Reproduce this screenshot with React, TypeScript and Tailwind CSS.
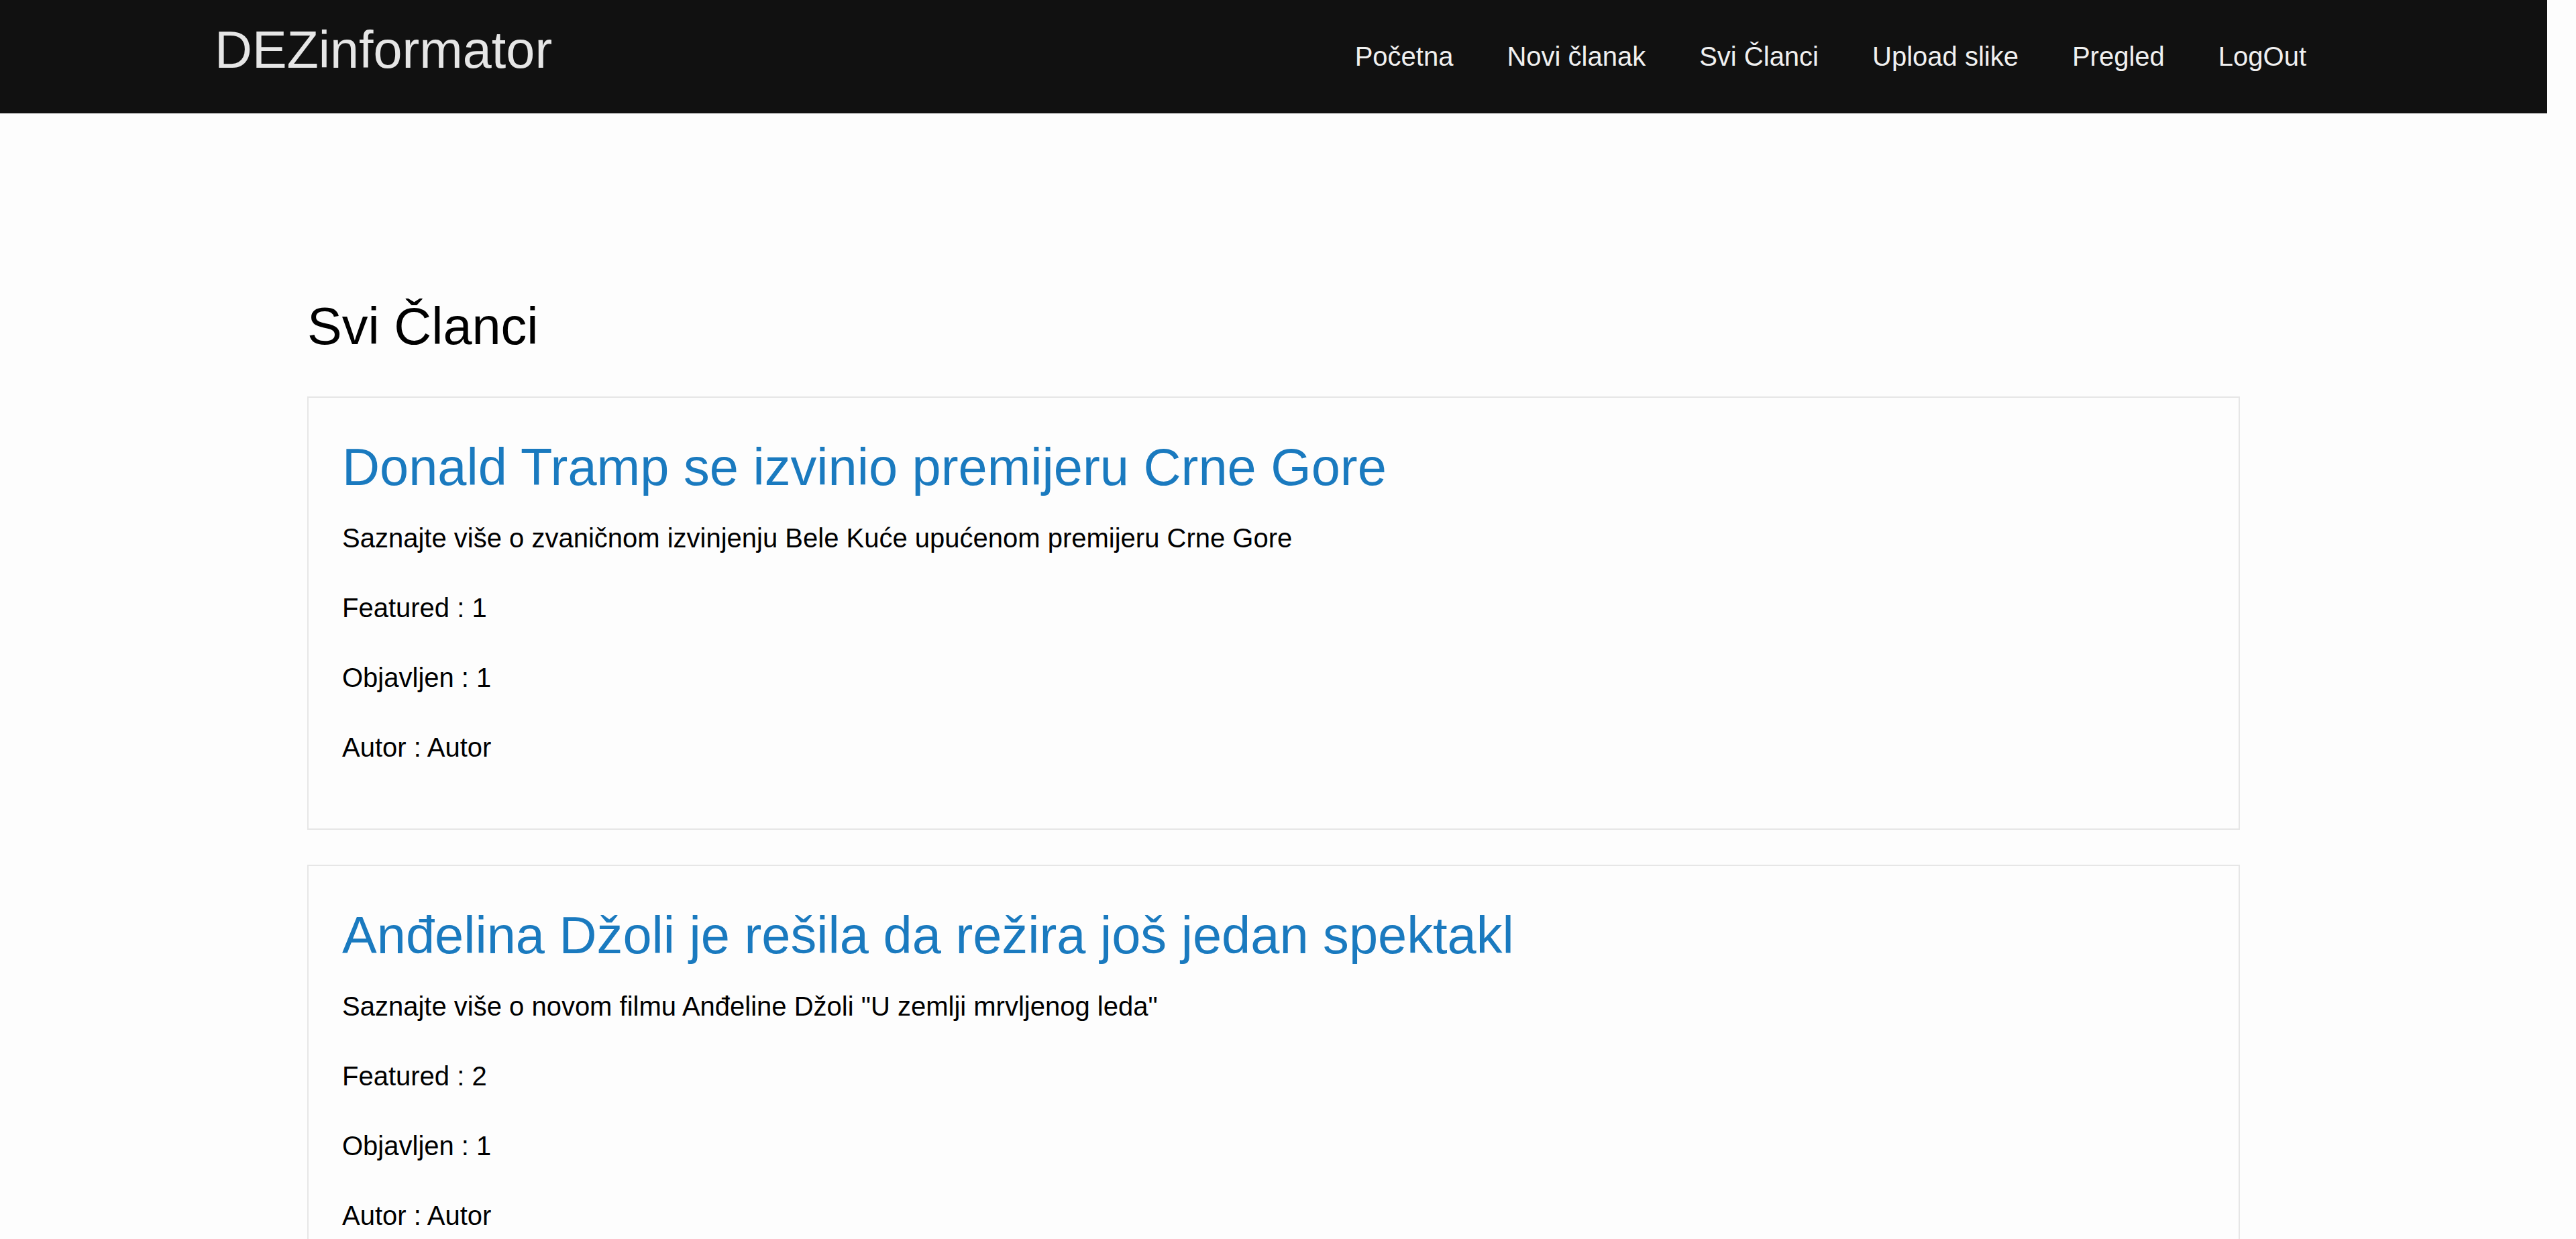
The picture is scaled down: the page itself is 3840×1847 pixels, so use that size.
import React from "react";

const links = ["Početna", "Novi članak", "Svi Članci", "Upload slike", "Pregled", "LogOut"];

const articles = [
    {
        title: "Donald Tramp se izvinio premijeru Crne Gore",
        description: "Saznajte više o zvaničnom izvinjenju Bele Kuće upućenom premijeru Crne Gore",
        featured: 1,
        published: 1,
        author: "Autor",
    },
    {
        title: "Anđelina Džoli je rešila da režira još jedan spektakl",
        description: 'Saznajte više o novom filmu Anđeline Džoli "U zemlji mrvljenog leda"',
        featured: 2,
        published: 1,
        author: "Autor",
    },
];

const ArticleCard = ({
    title,
    description,
    featured,
    published,
    author,
}: {
    title: string;
    description: string;
    featured: number;
    published: number;
    author: string;
}) => {
    return (
        <div className="border-2 border-[#e6e6e6] pt-[65px] pb-[101px] px-[50px] flex flex-col">
            <h3 className="text-[77.6px] leading-[77px] text-[#1a7abf] whitespace-nowrap">{title}</h3>
            <p className="mt-[47px] text-[40px] leading-[40px] whitespace-nowrap">{description}</p>
            <p className="mt-[64px] text-[40px] leading-[40px]">Featured : {featured}</p>
            <p className="mt-[64px] text-[40px] leading-[40px]">Objavljen : {published}</p>
            <p className="mt-[64px] text-[40px] leading-[40px]">Autor : {author}</p>
        </div>
    );
};

export default function App() {
    return (
        <div
            className="h-[1847px] w-[3840px] overflow-hidden bg-[#fdfdfd] text-black"
            style={{ fontFamily: '"Liberation Sans", Arial, sans-serif' }}
        >
            <div className="w-[3797px]">
                <nav className="h-[169px] bg-[#111111] flex items-start justify-between pl-[320px] pr-[359px]">
                    <a className="mt-[36px] text-[77.4px] leading-[77px] text-[#e6e6e6]">DEZinformator</a>
                    <ul className="mt-[64px] flex gap-[80px]">
                        {links.map((link) => (
                            <li key={link} className="text-[40px] leading-[40px] text-[#f0f0f0]">
                                {link}
                            </li>
                        ))}
                    </ul>
                </nav>

                <main className="w-[2881px] mx-auto">
                    <h1 className="mt-[279px] text-[77.5px] leading-[76px]">Svi Članci</h1>
                    <div className="mt-[67px] flex flex-col gap-[52px]">
                        {articles.map((article) => (
                            <ArticleCard key={article.title} {...article} />
                        ))}
                    </div>
                </main>
            </div>
        </div>
    );
}
